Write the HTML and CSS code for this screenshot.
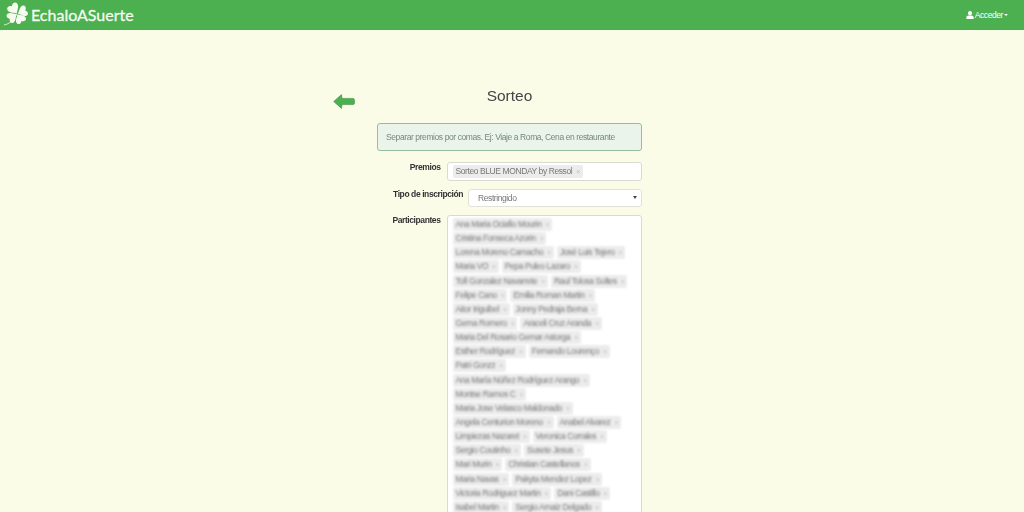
FILE: index.html
```html
<!DOCTYPE html>
<html lang="es">
<head>
    <meta charset="UTF-8">
    <meta name="viewport" content="width=device-width, initial-scale=1.0">
    <title>Sorteo - EchaloASuerte</title>
    <link rel="stylesheet" href="styles.css">
</head>
<body>
    <nav class="navbar">
        <a class="brand" href="#">
            <svg class="clover" width="26" height="24" viewBox="0 0 26 24">
                <path class="stem" d="M0 23 C5 22 9 19 13 12"/>
                <g transform="translate(13 11.5)">
                    <path class="leaf" transform="rotate(-35) scale(0.98 1.05)" d="M0 0 C-1 -2 -6 -4 -6 -7.5 C-6 -10.5 -2 -11 0 -8.5 C2 -11 6 -10.5 6 -7.5 C6 -4 1 -2 0 0 Z"/>
                    <path class="leaf" transform="translate(0.8 0) rotate(68) scale(0.9 0.95)" d="M0 0 C-1 -2 -6 -4 -6 -7.5 C-6 -10.5 -2 -11 0 -8.5 C2 -11 6 -10.5 6 -7.5 C6 -4 1 -2 0 0 Z"/>
                    <path class="leaf" transform="translate(0.5 0.5) rotate(150) scale(0.88 0.95)" d="M0 0 C-1 -2 -6 -4 -6 -7.5 C-6 -10.5 -2 -11 0 -8.5 C2 -11 6 -10.5 6 -7.5 C6 -4 1 -2 0 0 Z"/>
                    <path class="leaf" transform="translate(-0.5 0.5) rotate(-125) scale(0.88 0.95)" d="M0 0 C-1 -2 -6 -4 -6 -7.5 C-6 -10.5 -2 -11 0 -8.5 C2 -11 6 -10.5 6 -7.5 C6 -4 1 -2 0 0 Z"/>
                </g>
            </svg>
            <span class="brand-name">EchaloASuerte</span>
        </a>
        <a class="login" href="#">
            <svg width="8" height="8" viewBox="0 0 8 8"><path d="M4 0 C5.4 0 6 1 6 2.2 C6 3.4 5.4 4.4 4 4.4 C2.6 4.4 2 3.4 2 2.2 C2 1 2.6 0 4 0 Z M0.3 8 L0.3 6.4 C0.3 5.2 1.4 4.8 2.4 4.4 C3.4 5 4.6 5 5.6 4.4 C6.6 4.8 7.7 5.2 7.7 6.4 L7.7 8 Z"/></svg>
            Acceder
            <span class="caret"></span>
        </a>
    </nav>

    <main class="page">
        <div class="panel">
            <a class="back" href="#">
                <svg width="22" height="15" viewBox="0 0 22 15"><path d="M8.5 0.6 L0.7 7.5 L8.5 14.4 L9 10.6 L20 10.6 C21.3 10.6 21.6 9.6 21.6 7.5 C21.6 5.4 21.3 4.4 20 4.4 L9 4.4 Z"/></svg>
            </a>
            <h1 class="title">Sorteo</h1>

            <div class="form-area">
                <div class="alert">Separar premios por comas. Ej: Viaje a Roma, Cena en restaurante</div>

                <div class="field">
                    <label class="field-label">Premios</label>
                    <div class="tokens tokens-single">
                        <span class="chip">Sorteo BLUE MONDAY by Ressol <i>×</i></span>
                    </div>
                </div>

                <div class="field">
                    <label class="field-label field-label-wide">Tipo de inscripción</label>
                    <div class="select">
                        <span>Restringido</span>
                        <span class="select-arrow"></span>
                    </div>
                </div>

                <div class="field">
                    <label class="field-label">Participantes</label>
                    <div class="tokens" id="participants"></div>
                </div>
            </div>
        </div>
    </main>

    <script>
        const rows = [
            ['Ana Maria Ociafio Mourin'],
            ['Cristina Fonseca Azorin'],
            ['Lorena Moreno Camacho', 'José Luis Tejero'],
            ['Maria VO', 'Pepa Puleo Lazaro'],
            ['Tofi Gonzalez Navarrete', 'Raul Tolosa Soltes'],
            ['Felipe Cano', 'Emilia Roman Martin'],
            ['Aitor Iriguibel', 'Jonny Pedraja Berna'],
            ['Gema Romero', 'Araceli Cruz Aranda'],
            ['Maria Del Rosario Gemar Astorga'],
            ['Esther Rodríguez', 'Fernando Lourenço'],
            ['Patri Gonzz'],
            ['Ana María Núñez Rodríguez Arango'],
            ['Montse Ramos C'],
            ['Maria Jose Velasco Maldonado'],
            ['Angela Centurion Moreno', 'Anabel Alvarez'],
            ['Limpiezas Nazaret', 'Veronica Corrales'],
            ['Sergio Coutinho', 'Susete Jesus'],
            ['Mari Murin', 'Christian Castellanos'],
            ['Maria Navas', 'Pakyta Mendez Lopez'],
            ['Victoria Rodriguez Martin', 'Dani Castillo'],
            ['Isabel Martin', 'Sergio Amaiz Delgado']
        ];

        const box = document.getElementById('participants');
        rows.forEach((row) => {
            const line = document.createElement('div');
            line.className = 'chip-row';
            row.forEach((name) => {
                const chip = document.createElement('span');
                chip.className = 'chip chip-blur';
                chip.innerHTML = `${name} <i>×</i>`;
                line.appendChild(chip);
            });
            box.appendChild(line);
        });
    </script>
</body>
</html>
```

FILE: styles.css
```css
html, body {
    height: 100%;
}
body {
    margin: 0;
    overflow: hidden;
    background-color: #FBFCE8;
    color: #333;
    font-family: "Liberation Sans", Arial, sans-serif;
    font-size: 8.5px;
    letter-spacing: -0.41px;
}
a {
    text-decoration: none;
}
.navbar {
    display: flex;
    justify-content: space-between;
    align-items: center;
    height: 30px;
    background-color: #4CAF50;
    padding: 0 16px 0 4px;
    box-sizing: border-box;
}
.brand {
    display: flex;
    align-items: center;
    gap: 1px;
    margin-top: -2px;
    color: #F4FBEF;
}
.brand-name {
    font-family: Lato, "Open Sans", sans-serif;
    font-size: 16px;
    letter-spacing: 0;
    -webkit-text-stroke: 0.3px #F4FBEF;
}
.clover .leaf {
    fill: #F7FBEF;
}
.clover .stem {
    fill: none;
    stroke: #F7FBEF;
    stroke-width: 0.8;
}
.login {
    display: flex;
    align-items: center;
    gap: 1px;
    margin-top: -1px;
    color: #fff;
}
.login svg {
    fill: #fff;
}
.caret {
    width: 0;
    height: 0;
    border-left: 2.5px solid transparent;
    border-right: 2.5px solid transparent;
    border-top: 2.5px solid #fff;
}
.page {
    display: flex;
    justify-content: center;
}
.panel {
    display: grid;
    grid-template-columns: 44px 265px;
    margin-left: -49px;
    padding-top: 56px;
    filter: blur(0.3px);
}
.back {
    padding-top: 8px;
    line-height: 0;
}
.back svg {
    fill: #4CAF50;
    stroke: #3C8F42;
    stroke-width: 0.6;
}
.title {
    margin: 0 0 1px;
    height: 36px;
    text-align: center;
    font-size: 15.5px;
    font-weight: 400;
    letter-spacing: 0;
    line-height: 20px;
    color: #444;
}
.form-area {
    grid-column: 2;
}
.alert {
    height: 28px;
    line-height: 26px;
    box-sizing: border-box;
    margin-bottom: 11px;
    padding: 0 8px;
    background-color: #EAF4EB;
    border: 1px solid #94BE9C;
    border-radius: 3px;
    color: #74897A;
    white-space: nowrap;
}
.field {
    display: flex;
    gap: 5px;
    margin-bottom: 8px;
    align-items: flex-start;
}
.field-label {
    flex-shrink: 0;
    box-sizing: border-box;
    width: 64.5px;
    padding-right: 1px;
    text-align: right;
    font-weight: bold;
    line-height: 11px;
}
.field-label-wide {
    width: 86px;
    padding-right: 0;
}
.tokens {
    flex: 1;
    min-width: 0;
    box-sizing: border-box;
    background-color: #fff;
    border: 1px solid #DADAD0;
    border-radius: 3px;
    padding: 2px 5px;
    min-height: 300px;
}
.tokens-single {
    min-height: 0;
    height: 18.5px;
    padding-top: 2px;
}
.chip-row {
    display: flex;
    gap: 3px;
    height: 14.15px;
}
.chip {
    display: inline-block;
    height: 13px;
    line-height: 13px;
    padding: 0 3px;
    background-color: #ECECEC;
    border-radius: 2px;
    color: #777;
    white-space: nowrap;
}
.chip i {
    margin-left: 2px;
    font-style: normal;
    color: #BBB;
    font-size: 7px;
}
.chip-blur {
    filter: blur(1.1px);
}
.select {
    flex: 1;
    display: flex;
    justify-content: space-between;
    align-items: center;
    height: 18.5px;
    box-sizing: border-box;
    padding: 0 4px 0 9px;
    background-color: #fff;
    border: 1px solid #E2E2DA;
    border-radius: 3px;
    color: #777;
}
.select-arrow {
    width: 0;
    height: 0;
    border-left: 2px solid transparent;
    border-right: 2px solid transparent;
    border-top: 3px solid #444;
}
```
